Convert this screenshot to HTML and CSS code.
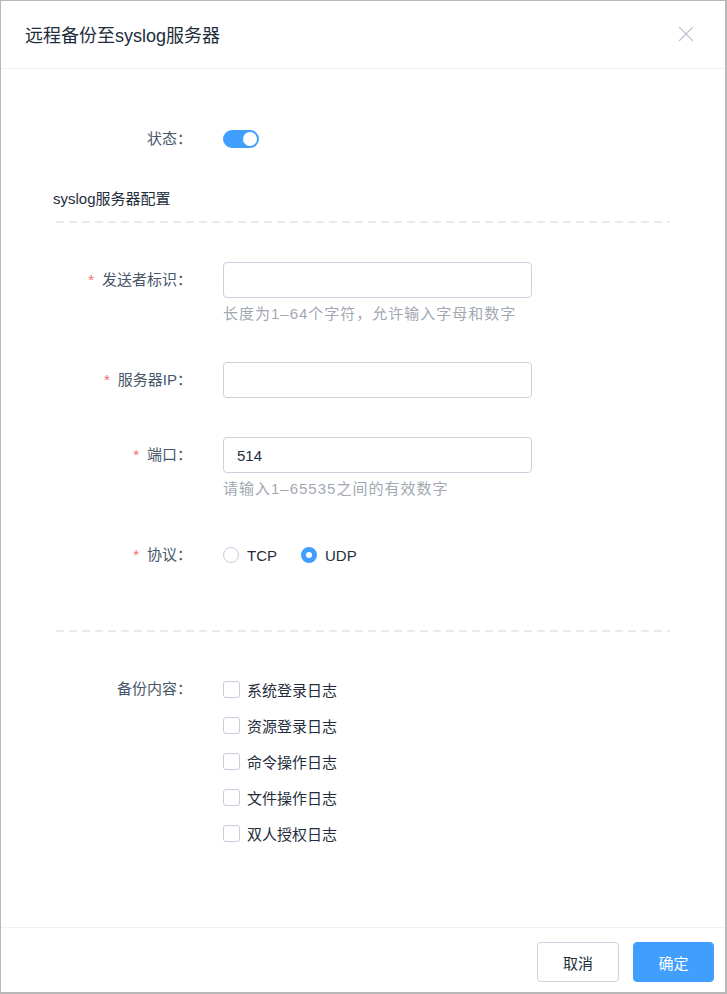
FILE: index.html
```html
<!DOCTYPE html>
<html lang="zh-CN">
<head>
    <meta charset="UTF-8">
    <meta name="viewport" content="width=device-width, initial-scale=1.0">
    <title>远程备份至syslog服务器</title>
    <link rel="stylesheet" href="styles.css">
</head>
<body>
    <div class="dialog">
        <header class="dialog-header">
            <span class="dialog-title">远程备份至syslog服务器</span>
            <button class="dialog-close" type="button" aria-label="关闭">
                <svg width="16" height="16" viewBox="0 0 16 16">
                    <path d="M1 1 L15 15 M15 1 L1 15" stroke="#bcc2d6" stroke-width="1.2" fill="none"/>
                </svg>
            </button>
        </header>

        <main class="dialog-body">
            <div class="form-item item-status">
                <label class="form-label">状态：</label>
                <div class="form-control">
                    <span class="switch is-on"><span class="switch-knob"></span></span>
                </div>
            </div>

            <div class="section-title">syslog服务器配置</div>
            <div class="dashed-line"></div>

            <div class="form-item item-first">
                <label class="form-label is-required">发送者标识：</label>
                <div class="form-control">
                    <input class="text-input" type="text">
                    <div class="form-hint">长度为1–64个字符，允许输入字母和数字</div>
                </div>
            </div>

            <div class="form-item">
                <label class="form-label is-required">服务器IP：</label>
                <div class="form-control">
                    <input class="text-input" type="text">
                </div>
            </div>

            <div class="form-item item-port">
                <label class="form-label is-required">端口：</label>
                <div class="form-control">
                    <input class="text-input" type="text" value="514">
                    <div class="form-hint">请输入1–65535之间的有效数字</div>
                </div>
            </div>

            <div class="form-item">
                <label class="form-label is-required">协议：</label>
                <div class="form-control radio-group">
                    <label class="radio"><span class="radio-dot"></span>TCP</label>
                    <label class="radio is-checked"><span class="radio-dot"></span>UDP</label>
                </div>
            </div>

            <div class="dashed-line line-bottom"></div>

            <div class="form-item item-first">
                <label class="form-label">备份内容：</label>
                <div class="form-control checkbox-group">
                    <label class="checkbox"><span class="checkbox-box"></span>系统登录日志</label>
                    <label class="checkbox"><span class="checkbox-box"></span>资源登录日志</label>
                    <label class="checkbox"><span class="checkbox-box"></span>命令操作日志</label>
                    <label class="checkbox"><span class="checkbox-box"></span>文件操作日志</label>
                    <label class="checkbox"><span class="checkbox-box"></span>双人授权日志</label>
                </div>
            </div>
        </main>

        <footer class="dialog-footer">
            <button class="btn" type="button">取消</button>
            <button class="btn btn-primary" type="button">确定</button>
        </footer>
    </div>
</body>
</html>
```

FILE: styles.css
```css
body {
    margin: 0;
    font-family: "Liberation Sans", "Noto Sans CJK SC", sans-serif;
    font-size: 14px;
    color: #1f2d3d;
    background-color: #fff;
}
.dialog {
    width: 727px;
    height: 994px;
    box-sizing: border-box;
    border-top: 1px solid #b8b8b8;
    border-left: 1px solid #b8b8b8;
    border-right: 2px solid #b8b8b8;
    border-bottom: 2px solid #b8b8b8;
    display: flex;
    flex-direction: column;
    background-color: #fff;
}
.dialog-header {
    height: 65px;
    border-bottom: 1px solid #f0f1f4;
    display: flex;
    align-items: center;
    justify-content: space-between;
    padding: 0 31px 2px 24px;
}
.dialog-title {
    font-size: 18px;
    color: #1f2d3d;
}
.dialog-close {
    border: none;
    background: none;
    padding: 0;
    width: 16px;
    height: 16px;
    display: flex;
}
.dialog-body {
    flex: 1;
    padding: 0 55px;
}
.section-title {
    margin-top: 32px;
    margin-left: -3px;
    line-height: 20px;
    font-size: 15px;
    color: #1f2d3d;
}
.dashed-line {
    margin-top: 12px;
    height: 2px;
    background-image: linear-gradient(to right, #e9eaec 8px, transparent 8px);
    background-size: 13px 2px;
    background-repeat: repeat-x;
}
.line-bottom {
    margin-top: 57px;
}
.form-item {
    display: flex;
    align-items: flex-start;
    margin-top: 38px;
}
.item-first,
.item-port {
    margin-top: 39px;
}
.item-status {
    margin-top: 52px;
}
.form-label {
    width: 136px;
    flex-shrink: 0;
    text-align: right;
    line-height: 36px;
    height: 36px;
    font-size: 15px;
    color: #48576a;
    white-space: nowrap;
}
.form-label.is-required::before {
    content: "*";
    color: #f56c6c;
    margin-right: 8px;
}
.form-control {
    margin-left: 31px;
    min-height: 36px;
    display: flex;
    flex-direction: column;
    justify-content: center;
}
.text-input {
    width: 309px;
    height: 36px;
    box-sizing: border-box;
    border: 1px solid #ccd2dd;
    border-radius: 4px;
    padding: 0 13px;
    font-family: inherit;
    font-size: 15px;
    color: #1f2d3d;
    outline: none;
}
.form-hint {
    margin-top: 6px;
    line-height: 20px;
    font-size: 15px;
    letter-spacing: 1px;
    color: #a2a8b2;
}
.switch {
    position: relative;
    display: inline-block;
    width: 36px;
    height: 18px;
    border-radius: 9px;
    background-color: #ccd2dd;
}
.switch.is-on {
    background-color: #409eff;
}
.switch-knob {
    position: absolute;
    top: 2px;
    left: 2px;
    width: 14px;
    height: 14px;
    border-radius: 50%;
    background-color: #fff;
}
.switch.is-on .switch-knob {
    left: 20px;
}
.radio-group {
    flex-direction: row;
    align-items: center;
    height: 36px;
    gap: 24px;
}
.radio,
.checkbox {
    display: flex;
    align-items: center;
    font-size: 15px;
    color: #1f2d3d;
}
.radio-dot {
    width: 16px;
    height: 16px;
    box-sizing: border-box;
    border: 1px solid #c6cddb;
    border-radius: 50%;
    margin-right: 8px;
}
.radio.is-checked .radio-dot {
    border: 5px solid #409eff;
    background-color: #fff;
}
.checkbox-group {
    justify-content: flex-start;
}
.checkbox {
    height: 36px;
}
.checkbox-box {
    width: 17px;
    height: 17px;
    box-sizing: border-box;
    border: 1px solid #c6cddb;
    border-radius: 3px;
    margin-right: 7px;
}
.dialog-footer {
    border-top: 1px solid #f0f1f4;
    padding: 14px 11px 10px;
    display: flex;
    justify-content: flex-end;
    gap: 14px;
}
.btn {
    width: 82px;
    height: 40px;
    border: 1px solid #ccd2dd;
    border-radius: 4px;
    background-color: #fff;
    color: #1f2d3d;
    font-family: inherit;
    font-size: 15px;
}
.btn-primary {
    width: 81px;
    border-color: #409eff;
    background-color: #409eff;
    color: #fff;
}
```
